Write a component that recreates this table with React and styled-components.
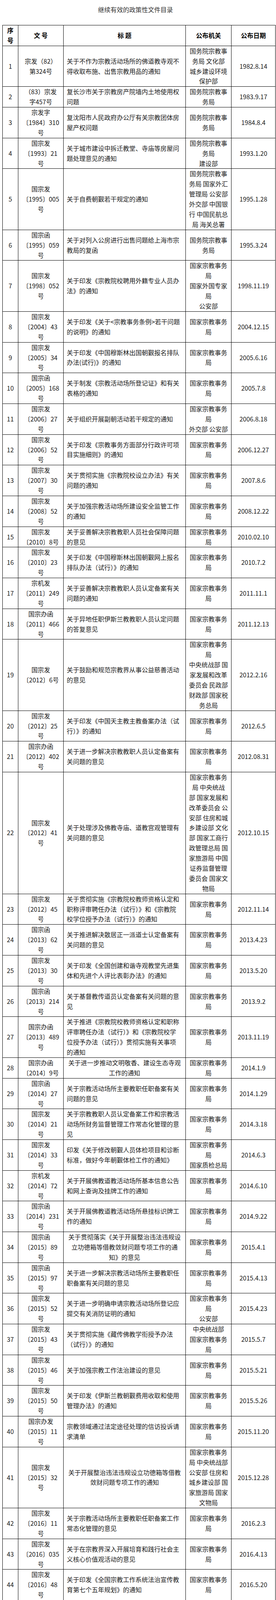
import React from "react";
import styled, { createGlobalStyle } from "styled-components";

const GlobalStyle = createGlobalStyle`
  html, body { margin: 0; padding: 0; background: #fff; }
  body {
    font-family: "Noto Sans CJK SC", "Noto Sans", sans-serif;
    color: #1a1a1a;
  }
`;

const Page = styled.div`
  width: 707px;
  padding: 11px 0 0 6px;
  box-sizing: border-box;
`;

const Title = styled.h1`
  margin: 0 0 27px 0;
  padding-right: 18px;
  width: 700px;
  height: 26px;
  box-sizing: border-box;
  text-align: center;
  font-size: 16px;
  line-height: 26px;
  font-weight: 400;
  color: #333;
`;

const Grid = styled.div`
  width: 700px;
  box-sizing: border-box;
  border-top: 1px solid #000;
  border-left: 1px solid #000;
`;

const Row = styled.div`
  display: grid;
  grid-template-columns: 40px 116px 313px 117px 113px;
`;

const Cell = styled.div`
  box-sizing: border-box;
  border-right: 1px solid #000;
  border-bottom: 1px solid #000;
  display: flex;
  flex-direction: column;
  justify-content: center;
  align-items: ${(p) => (p.$align === "left" ? "flex-start" : "center")};
  padding: ${(p) => (p.$align === "left" ? "0 6px 0 8px" : "0")};
  font-size: 16px;
  font-weight: ${(p) => (p.$head ? 700 : 400)};
  color: ${(p) => (p.$head ? "#000" : "#1a1a1a")};
  text-align: ${(p) => p.$align || "center"};
  white-space: nowrap;
  overflow: hidden;
`;

const Line = styled.span`
  display: block;
  height: 25.9px;
  line-height: 25.9px;
`;

const Lines = ({ items }) =>
  items.map((t, i) => <Line key={i}>{t}</Line>);

const ZJ = ["国家宗教事务", "局"];
const GW = ["国务院宗教事", "务局"];

const rows = [
  [["宗发（82）", "第324号"], ["关于不作为宗教活动场所的佛道教寺观不", "得收取布施、出售宗教用品的通知"], ["国务院宗教事", "务局 文化部", "城乡建设环境", "保护部"], "1982.8.14"],
  [["（83）宗发", "字457号"], ["复长沙市关于宗教房产院墙内土地使用权", "问题"], GW, "1983.9.17"],
  [["宗发字", "〔1984〕310", "号"], ["复沈阳市人民政府办公厅有关宗教团体房", "屋产权问题"], GW, "1984.8.4"],
  [["国宗发", "〔1993〕21", "号"], ["关于城市建设中拆迁教堂、寺庙等房屋问", "题处理意见的通知"], ["国务院宗教事", "务局", "建设部"], "1993.1.20"],
  [["国宗发", "〔1995〕005", "号"], ["关于自费朝觐若干规定的通知"], ["国务院宗教事", "务局 国家外汇", "管理局 公安部", "外交部 中国银", "行 中国民航总", "局 海关总署"], "1995.1.28"],
  [["国宗函", "〔1995〕059", "号"], ["关于对列入公房进行出售问题给上海市宗", "教局的复函"], GW, "1995.3.24"],
  [["国宗发", "〔1998〕052", "号"], ["关于印发《宗教院校聘用外籍专业人员办", "法》的通知"], ["国家宗教事务", "局", "国家外国专家", "局", "公安部"], "1998.11.19"],
  [["国宗发", "〔2004〕43", "号"], ["关于印发《关于<宗教事务条例>若干问题", "的说明》的通知"], ZJ, "2004.12.15"],
  [["国宗发", "〔2005〕34", "号"], ["关于印发《中国穆斯林出国朝觐报名排队", "办法(试行)》的通知"], ZJ, "2005.6.16"],
  [["国宗函", "〔2005〕168", "号"], ["关于制发《宗教活动场所登记证》和有关", "表格的通知"], ZJ, "2005.7.8"],
  [["国宗发", "〔2006〕27", "号"], ["关于组织开展副朝活动若干规定的通知"], ["国家宗教事务", "局", "外交部 公安部"], "2006.8.18"],
  [["国宗发", "〔2006〕52", "号"], ["关于印发《宗教事务方面部分行政许可项", "目实施细则》的通知"], ZJ, "2006.12.27"],
  [["国宗发", "〔2007〕30", "号"], ["关于贯彻实施《宗教院校设立办法》有关", "问题的通知"], ZJ, "2007.8.6"],
  [["国宗发", "〔2008〕52", "号"], ["关于加强宗教活动场所建设安全监管工作", "的通知"], ZJ, "2008.12.22"],
  [["国宗发", "〔2010〕8号"], ["关于妥善解决宗教教职人员社会保障问题", "的意见"], ZJ, "2010.02.10"],
  [["国宗发", "〔2010〕23", "号"], ["关于印发《中国穆斯林出国朝觐网上报名", "排队办法（试行）》的通知"], ZJ, "2010.7.2"],
  [["宗机发", "〔2011〕249", "号"], ["关于妥善解决宗教教职人员认定备案有关", "问题的通知"], ZJ, "2011.11.1"],
  [["国宗办函", "〔2011〕466", "号"], ["关于异地任职伊斯兰教教职人员认定问题", "的答复意见"], ZJ, "2011.12.13"],
  [["国宗发", "〔2012〕6号"], ["关于鼓励和规范宗教界从事公益慈善活动", "的意见"], ["国家宗教事务", "局", "中央统战部 国", "家发展和改革", "委员会 民政部", "财政部 国家税", "务总局"], "2012.2.16"],
  [["国宗发", "〔2012〕25", "号"], ["关于印发《中国天主教主教备案办法（试", "行）》的通知"], ZJ, "2012.6.5"],
  [["国宗办函", "〔2012〕402", "号"], ["关于进一步解决宗教教职人员认定备案有", "关问题的意见"], ZJ, "2012.08.31"],
  [["国宗发", "〔2012〕41", "号"], ["关于处理涉及佛教寺庙、道教宫观管理有", "关问题的意见"], ["国家宗教事务", "局 中央统战", "部 国家发展和", "改革委员会 公", "安部 住房和城", "乡建设部 文化", "部 国家工商行", "政管理总局 国", "家旅游局 中国", "证券监督管理", "委员会 国家文", "物局"], "2012.10.15"],
  [["国宗发", "〔2012〕45", "号"], ["关于贯彻实施《宗教院校教师资格认定和", "职称评审聘任办法（试行）》和《宗教院", "校学位授予办法（试行）》的通知"], ZJ, "2012.11.14"],
  [["国宗函", "〔2013〕62", "号"], ["关于推进解决散居正一派道士认定备案有", "关问题的意见"], ZJ, "2013.4.23"],
  [["国宗发", "〔2013〕30", "号"], ["关于印发《全国创建和谐寺观教堂先进集", "体和先进个人评比表彰办法》的通知"], ZJ, "2013.5.20"],
  [["国宗函", "〔2013〕214", "号"], ["关于基督教传道员认定备案有关问题的意", "见"], ZJ, "2013.9.2"],
  [["国宗办函", "〔2013〕489", "号"], ["关于推进《宗教院校教师资格认定和职称", "评审聘任办法（试行）》和《宗教院校学", "位授予办法（试行）》贯彻实施有关事项", "的通知"], ZJ, "2013.11.19"],
  [["国宗办函", "〔2014〕9号"], ["关于进一步推动文明敬香、建设生态寺观", "工作的通知"], ZJ, "2014.1.9", true],
  [["国宗函", "〔2014〕27", "号"], ["关于宗教活动场所主要教职任职备案有关", "问题的意见"], ZJ, "2014.1.29"],
  [["国宗发", "〔2014〕21", "号"], ["关于宗教教职人员认定备案工作和宗教活", "动场所财务监督管理工作常态化管理的意", "见"], ZJ, "2014.3.18"],
  [["国宗发", "〔2014〕33", "号"], ["印发《关于修改朝觐人员体检项目和诊断", "标准，做好今年朝觐体检工作的通知》"], ["国家宗教事务", "局", "国家质检总局"], "2014.6.3"],
  [["宗机发", "〔2014〕72", "号"], ["关于开展佛教道教活动场所基本信息公告", "和网上查询及挂牌工作的通知"], ZJ, "2014.6.10"],
  [["国宗函", "〔2014〕231", "号"], ["关于开展佛教道教活动场所悬挂标识牌工", "作的通知"], ZJ, "2014.9.22"],
  [["国宗函", "〔2015〕89", "号"], ["关于贯彻落实《关于开展整治违法违规设", "立功德箱等借教敛财问题专项工作的通", "知》的意见"], ZJ, "2015.4.1", true],
  [["国宗函", "〔2015〕97", "号"], ["关于进一步解决宗教活动场所主要教职任", "职备案有关问题的意见"], ZJ, "2015.4.13"],
  [["国宗发", "〔2015〕52", "号"], ["关于进一步明确申请宗教活动场所登记应", "提交有关消防证明的通知"], ["国家宗教事务", "局", "公安部"], "2015.4.23"],
  [["国宗发", "〔2015〕43", "号"], ["关于贯彻实施《藏传佛教学衔授予办法", "（试行）》的通知"], ["中央统战部", "国家宗教事务", "局"], "2015.5.7"],
  [["国宗发", "〔2015〕46", "号"], ["关于加强宗教工作法治建设的意见"], ZJ, "2015.5.21"],
  [["国宗发", "〔2015〕50", "号"], ["关于印发《伊斯兰教朝觐费用收取和使用", "管理办法》的通知"], ZJ, "2015.5.26"],
  [["国宗办发", "〔2015〕11", "号"], ["宗教领域通过法定途径处理的信访投诉请", "求清单"], ZJ, "2015.11.20"],
  [["国宗发", "〔2015〕32", "号"], ["关于开展整治违法违规设立功德箱等借教", "敛财问题专项工作的通知"], ["国家宗教事务", "局 中央统战部", "公安部 住房和", "城乡建设部 国", "家旅游局 国家", "文物局"], "2015.12.28", true],
  [["国宗发", "〔2016〕11", "号"], ["关于宗教活动场所主要教职任职备案工作", "常态化管理的意见"], ZJ, "2016.2.3"],
  [["国宗发", "〔2016〕035", "号"], ["关于在宗教界深入开展培育和践行社会主", "义核心价值观活动的意见"], ZJ, "2016.4.13"],
  [["国宗发", "〔2016〕48", "号"], ["关于印发《全国宗教工作系统法治宣传教", "育第七个五年规划》的通知"], ZJ, "2016.5.20"],
];

export default function App() {
  return (
    <>
      <GlobalStyle />
      <Page>
        <Title>继续有效的政策性文件目录</Title>
        <Grid>
          <Row>
            <Cell $head>
              <Lines items={["序", "号"]} />
            </Cell>
            <Cell $head>
              <Line>文 号</Line>
            </Cell>
            <Cell $head>
              <Line>标 题</Line>
            </Cell>
            <Cell $head>
              <Line>公布机关</Line>
            </Cell>
            <Cell $head>
              <Line>公布日期</Line>
            </Cell>
          </Row>
          {rows.map(([doc, title, org, date, centered], i) => (
            <Row key={i}>
              <Cell>
                <Line>{i + 1}</Line>
              </Cell>
              <Cell>
                <Lines items={doc} />
              </Cell>
              <Cell $align={centered ? "center" : "left"}>
                <Lines items={title} />
              </Cell>
              <Cell>
                <Lines items={org} />
              </Cell>
              <Cell>
                <Line>{date}</Line>
              </Cell>
            </Row>
          ))}
        </Grid>
      </Page>
    </>
  );
}
